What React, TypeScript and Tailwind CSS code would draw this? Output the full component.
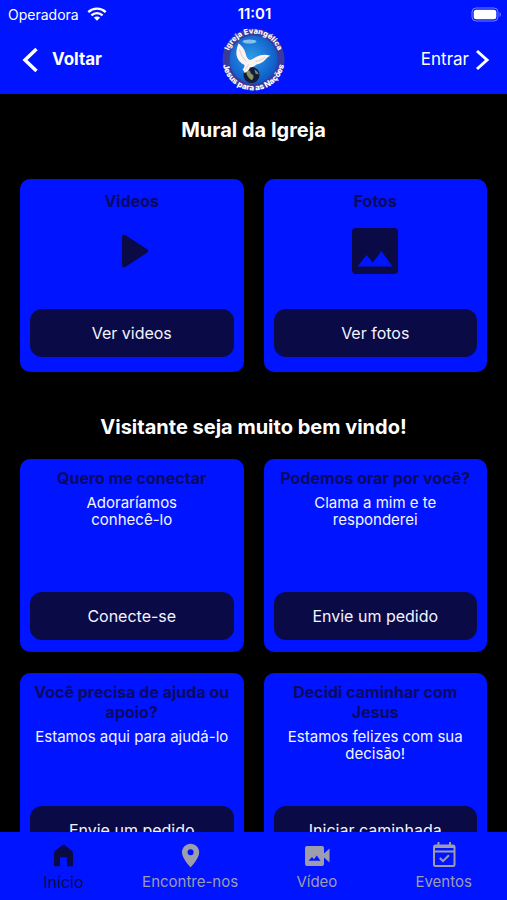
import type { ReactNode } from 'react'

interface CardData {
  title: string
  text: string
  action: string
}

interface TabData {
  label: string
  icon: ReactNode
  active?: boolean
}

const CARDS: CardData[] = [
  { title: 'Quero me conectar', text: 'Adoraríamos\nconhecê-lo', action: 'Conecte-se' },
  { title: 'Podemos orar por você?', text: 'Clama a mim e te\nresponderei', action: 'Envie um pedido' },
  { title: 'Você precisa de ajuda ou apoio?', text: 'Estamos aqui para ajudá-lo', action: 'Envie um pedido' },
  { title: 'Decidi caminhar com Jesus', text: 'Estamos felizes com sua\ndecisão!', action: 'Iniciar caminhada' },
]

const TABS: TabData[] = [
  { label: 'Início', icon: <HomeIcon />, active: true },
  { label: 'Encontre-nos', icon: <PinIcon /> },
  { label: 'Vídeo', icon: <VideoIcon /> },
  { label: 'Eventos', icon: <EventIcon /> },
]

function HomeIcon() {
  return (
    <svg width="28" height="28" viewBox="0 0 28 28" fill="currentColor" aria-hidden="true">
      <path d="M14.500 2.800c.5 0 .9.2 1.300.5l7 5.400c.8.6 1.200 1.200 1.200 2.200v13.400h-6v-8.200c0-.6-.3-.9-.9-.9h-5.200c-.6 0-.9.3-.9.9v8.200H5V10.900c0-1 .4-1.600 1.200-2.200l7-5.400c.4-.3.800-.5 1.300-.5z" />
    </svg>
  )
}

function PinIcon() {
  return (
    <svg width="28" height="28" viewBox="0 0 24 24" fill="currentColor" aria-hidden="true">
      <path d="M12.500 1.500c-4 0-7.400 3.200-7.400 7.300 0 5.400 7.400 12.900 7.400 12.900s7.400-7.500 7.400-12.900c0-4.100-3.400-7.300-7.400-7.300zm0 9.900a2.600 2.600 0 1 1 0-5.200 2.600 2.600 0 0 1 0 5.200z" />
    </svg>
  )
}

function VideoIcon() {
  return (
    <svg width="28" height="28" viewBox="0 0 28 28" fill="currentColor" aria-hidden="true">
      <path
        fillRule="evenodd"
        d="M4 4h15a2 2 0 0 1 2 2v5.500l5.500-5v14l-5.500-5V22a2 2 0 0 1-2 2H4a2 2 0 0 1-2-2V6a2 2 0 0 1 2-2zM5.500 18.800H17.500l-3.700-5.200-2.800 3.600-2-2.200z"
      />
    </svg>
  )
}

function EventIcon() {
  return (
    <svg width="28" height="28" viewBox="0 0 28 28" fill="none" stroke="currentColor" strokeWidth="2" aria-hidden="true">
      <rect x="4" y="3.500" width="20.500" height="20.500" rx="1.500" />
      <path d="M4 5h20.500M4 9.500h20.500M8.500 0v4M20 0v4" />
      <path d="m9.800 16 3.200 3.200 6-6" />
    </svg>
  )
}

function WifiIcon() {
  return (
    <svg width="20" height="14" viewBox="0 0 20 14" fill="none" stroke="currentColor" strokeWidth="2.400" aria-label="Wi-Fi">
      <path d="M1.300 5.100c4.900-4.600 12.500-4.600 17.400 0" />
      <path d="M4.400 8.400c3.200-3 8-3 11.200 0" />
      <path d="M10 13.800 6.800 10.600c1.800-1.600 4.600-1.600 6.400 0z" fill="currentColor" stroke="none" />
    </svg>
  )
}

function BatteryIcon() {
  return (
    <svg width="30" height="15" viewBox="0 0 30 15" fill="none" aria-label="Bateria">
      <rect x="1" y="1" width="26" height="13" rx="4" stroke="white" strokeOpacity=".45" />
      <rect x="2.700" y="2.700" width="22.600" height="9.600" rx="2.500" fill="white" />
      <path d="M28.600 5.300c1.500.4 1.500 4 0 4.400z" fill="white" fillOpacity=".5" />
    </svg>
  )
}

function Logo() {
  return (
    <svg
      width="63"
      height="63"
      viewBox="1.5 1.5 63 63"
      className="overflow-visible"
      role="img"
      aria-label="Igreja Evangélica Jesus para as Nações"
    >
      <defs>
        <radialGradient id="sky" cx="45%" cy="45%" r="60%">
          <stop offset="0" stopColor="#2f9be8" />
          <stop offset="1" stopColor="#0a55c4" />
        </radialGradient>
        <path id="ringTop" d="M7 33a26 26 0 0 1 52 0" />
        <path id="ringBottom" d="M2 33a31 31 0 0 0 62 0" />
      </defs>
      <circle cx="33" cy="33" r="31" fill="#3a3a9c" />
      <circle cx="33" cy="33" r="24" fill="url(#sky)" />
      <ellipse cx="29" cy="15" rx="7" ry="2" fill="#9fd4f7" opacity=".8" />
      <circle cx="31" cy="48.500" r="8" fill="#101c38" />
      <path d="M26 45c2-2 4-1 4 1s3 1 3 4-2 4-3 3-5-5-4-8zM34 43c2 1 4 3 4 5l-3-1z" fill="#8a9060" />
      <path
        d="M18 17c3.500 2 6.500 6 8 13 1 2 2 3 3.500 3.500 2.500-.5 4-2 6.500-3.200 4-2 8-3 14-1-2.500 1-4 2.500-5.500 4.200-2.500 2.500-5.500 4-8.500 4.500-2 2-4 2.800-6.500 3-.8 2.500-2.500 4.500-5.500 5.500-.3-1.500-1-2.500-2-3.500 1.500-1.500 2-2.500 2-4.500-4.500-2-7-5.500-8-10-.5-4 .5-8 2-11.500z"
        fill="#fbf3ef"
      />
      <path d="M19 23c1.500 5 3.500 9 7 12m9 0c4-.5 7-2.500 10-4.500M28 38l-3 5" stroke="#e2c9c9" fill="none" />
      <g fill="white" fontFamily="Inter, sans-serif" fontWeight="800" textAnchor="middle">
        <text fontSize="7.500">
          <textPath href="#ringTop" startOffset="50%">Igreja Evangélica</textPath>
        </text>
        <text fontSize="8">
          <textPath href="#ringBottom" startOffset="50%">Jesus para as Nações</textPath>
        </text>
      </g>
    </svg>
  )
}

function PlayIcon() {
  return (
    <svg width="56" height="56" viewBox="0 0 56 56" fill="currentColor" aria-hidden="true">
      <path d="M18 13.800c0-1.800 1.600-2.600 3.100-1.700l22 14.200c1.300.8 1.300 2.600 0 3.400l-22 14.200c-1.500.9-3.100.1-3.100-1.700z" />
    </svg>
  )
}

function PhotoIcon() {
  return (
    <svg width="56" height="56" viewBox="0 0 56 56" fill="currentColor" aria-hidden="true">
      <path
        fillRule="evenodd"
        d="M9 5h38a4 4 0 0 1 4 4v38a4 4 0 0 1-4 4H9a4 4 0 0 1-4-4V9a4 4 0 0 1 4-4zM10.500 43.500h35L34.500 28l-8.700 11.500-6.200-7.500z"
      />
    </svg>
  )
}

function ActionButton({ children }: { children: ReactNode }) {
  return (
    <button type="button" className="h-12 w-full shrink-0 rounded-xl bg-[#0a0a46] text-base text-[#f4f4ff]">
      {children}
    </button>
  )
}

function MediaCard({ title, icon, action }: { title: string; icon: ReactNode; action: string }) {
  return (
    <article className="flex h-[193px] flex-col items-center rounded-[10px] bg-[#0014ff] px-[10px] pt-3 pb-[15px] text-[#0a0a46]">
      <h3 className="text-base leading-5 font-bold text-[#0a0a64]">{title}</h3>
      <div className="mt-3 flex-1">{icon}</div>
      <ActionButton>{action}</ActionButton>
    </article>
  )
}

function InfoCard({ title, text, action }: CardData) {
  return (
    <article className="flex h-[193px] flex-col items-center rounded-[10px] bg-[#0014ff] px-[10px] pt-[9px] pb-3 text-center">
      <h3 className="text-base leading-5 font-bold text-[#0a0a64]">{title}</h3>
      <p className="mt-[6px] flex-1 text-[15px] leading-[17px] whitespace-pre-line text-[#f4f4ff]">{text}</p>
      <ActionButton>{action}</ActionButton>
    </article>
  )
}

export default function App() {
  return (
    <div className="flex h-screen flex-col bg-black font-[Inter,'Noto_Sans',sans-serif] text-white">
      <header className="shrink-0 bg-[#0014ff]">
        <div className="grid h-7 grid-cols-3 items-center pr-[6px] pl-2 text-[14px]">
          <span className="flex items-center gap-2">
            Operadora <WifiIcon />
          </span>
          <span className="text-center text-[15px] font-semibold">11:01</span>
          <span className="flex justify-end">
            <BatteryIcon />
          </span>
        </div>
        <div className="grid h-[66px] grid-cols-3 items-center px-4 pb-[3px]">
          <button type="button" className="flex items-center gap-3 pl-1 text-[17px] font-bold">
            <svg width="20" height="26" viewBox="0 0 20 26" fill="none" stroke="currentColor" strokeWidth="3.500" aria-hidden="true">
              <path d="M16.500 2 5 13l11.500 11" />
            </svg>
            Voltar
          </button>
          <div className="flex justify-center">
            <Logo />
          </div>
          <button type="button" className="flex items-center justify-end gap-1 text-[17px]">
            Entrar
            <svg width="18" height="22" viewBox="0 0 18 22" fill="none" stroke="currentColor" strokeWidth="3" aria-hidden="true">
              <path d="m4 2 10 9L4 20" />
            </svg>
          </button>
        </div>
      </header>

      <main className="flex-1 overflow-y-auto px-5 [scrollbar-width:none]">
        <h2 className="pt-[22px] text-center text-xl leading-7 font-bold">Mural da Igreja</h2>
        <section className="mt-[35px] grid grid-cols-2 gap-5">
          <MediaCard title="Videos" icon={<PlayIcon />} action="Ver videos" />
          <MediaCard title="Fotos" icon={<PhotoIcon />} action="Ver fotos" />
        </section>

        <h2 className="mt-[41px] text-center text-xl leading-7 font-bold">Visitante seja muito bem vindo!</h2>
        <section className="mt-[18px] grid grid-cols-2 gap-x-5 gap-y-[21px] pb-5">
          {CARDS.map((card) => (
            <InfoCard key={card.title} {...card} />
          ))}
        </section>
      </main>

      <nav className="grid h-[68px] shrink-0 grid-cols-4 bg-[#0014ff]">
        {TABS.map((tab) => (
          <a
            key={tab.label}
            href="#"
            className={`flex flex-col items-center pt-[10px] leading-6 ${
              tab.active ? 'text-base text-[#0a0a46]' : 'text-[15px] text-[#9d9dae]'
            }`}
          >
            {tab.icon}
            {tab.label}
          </a>
        ))}
      </nav>
    </div>
  )
}
